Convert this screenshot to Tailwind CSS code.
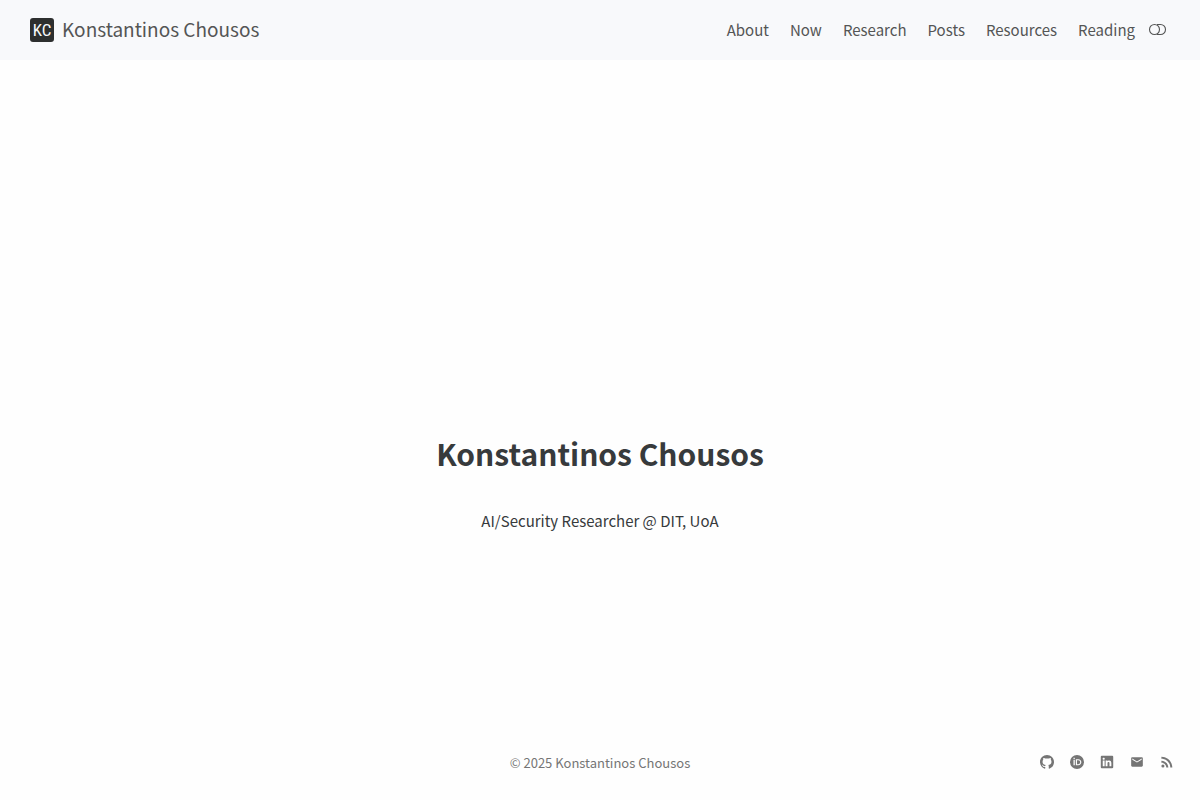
<!doctype html>
<html lang="en">
  <head>
    <meta charset="UTF-8">
    <meta name="viewport" content="width=device-width, initial-scale=1.0">
    <title>Konstantinos Chousos</title>
    <script src="https://cdn.jsdelivr.net/npm/@tailwindcss/browser@4"></script>
  </head>

  <body class="flex min-h-screen flex-col bg-[#fefefe] font-['Noto_Sans_CJK_SC','Noto_Sans',sans-serif] text-[#373a3c]">
    <!-- Navbar -->
    <header class="bg-[#f8f9fb] text-[#545555]">
      <nav class="flex h-15 items-center justify-between pr-[33px] pl-[30px]">
        <a href="/" class="flex items-center gap-2 text-[19px] leading-6">
          <svg class="size-6" viewBox="0 0 24 24" aria-hidden="true">
            <rect width="24" height="24" rx="3" fill="#2d2f2f" />
            <text x="12" y="18" text-anchor="middle" font-family="'Roboto Condensed', 'Noto Sans CJK SC', sans-serif" font-size="17" fill="#f8f9fb">KC</text>
          </svg>
          <span class="pb-0.5">Konstantinos Chousos</span>
        </a>
        <div class="flex items-center gap-3">
          <ul class="flex gap-[21px] text-[15px] leading-6">
            <li><a href="/about">About</a></li>
            <li><a href="/now">Now</a></li>
            <li><a href="/research">Research</a></li>
            <li><a href="/posts">Posts</a></li>
            <li><a href="/resources">Resources</a></li>
            <li><a href="/reading">Reading</a></li>
          </ul>
          <button type="button" aria-label="Toggle dark mode" class="flex">
            <svg class="h-5 w-5" viewBox="0 0 20 20" fill="none" stroke="currentColor" stroke-width="1.1">
              <circle cx="7.500" cy="9.500" r="5" />
              <path d="M10 4.500H13.500a5 5 0 0 1 0 10H10" />
            </svg>
          </button>
        </div>
      </nav>
    </header>

    <!-- Hero -->
    <main class="flex grow flex-col items-center justify-center pt-[170px] text-center">
      <h1 class="text-[30px] leading-10 font-bold">Konstantinos Chousos</h1>
      <p class="mt-9 text-[15px] leading-6">AI/Security Researcher @ DIT, UoA</p>
    </main>

    <!-- Footer -->
    <footer class="grid grid-cols-3 items-center px-[26px] pt-4 pb-[25px] text-[13px] leading-6 text-[#757575]">
      <p class="col-start-2 text-center">© 2025 Konstantinos Chousos</p>
      <ul class="flex justify-end gap-4 pb-0.5">
        <li>
          <a href="https://github.com" aria-label="GitHub">
            <svg class="size-[14px]" viewBox="0 0 16 16" fill="currentColor">
              <path d="M8 0C3.58 0 0 3.58 0 8c0 3.54 2.29 6.53 5.47 7.59.4.07.55-.17.55-.38 0-.19-.01-.82-.01-1.49-2.01.37-2.53-.49-2.69-.94-.09-.23-.48-.94-.82-1.13-.28-.15-.68-.52-.01-.53.63-.01 1.08.58 1.23.82.72 1.21 1.87.87 2.33.66.07-.52.28-.87.51-1.07-1.78-.2-3.64-.89-3.64-3.95 0-.87.31-1.59.82-2.15-.08-.2-.36-1.02.08-2.12 0 0 .67-.21 2.2.82.64-.18 1.32-.27 2-.27.68 0 1.36.09 2 .27 1.53-1.04 2.2-.82 2.2-.82.44 1.1.16 1.92.08 2.12.51.56.82 1.27.82 2.15 0 3.07-1.87 3.75-3.65 3.95.29.25.54.73.54 1.48 0 1.07-.01 1.93-.01 2.2 0 .21.15.46.55.38A8.012 8.012 0 0 0 16 8c0-4.42-3.58-8-8-8z" />
            </svg>
          </a>
        </li>
        <li>
          <a href="https://orcid.org" aria-label="ORCID">
            <svg class="size-[14px]" viewBox="0 0 24 24" fill="currentColor">
              <path fill-rule="evenodd" d="M12 0a12 12 0 1 0 0 24 12 12 0 0 0 0-24zM6 4.500h2.200v2.200H6zM6 8h2.200v9.500H6zM10 7.400h4c3.700 0 5.400 2.600 5.400 5s-2 5.100-5.400 5.100h-4zM12 9.200v6.500h2c2.500 0 3.400-1.700 3.400-3.300s-.9-3.200-3.400-3.200z" />
            </svg>
          </a>
        </li>
        <li>
          <a href="https://www.linkedin.com" aria-label="LinkedIn">
            <svg class="size-[14px]" viewBox="-1 -1 18 18" fill="currentColor">
              <path d="M0 1.146C0 .513.526 0 1.175 0h13.65C15.474 0 16 .513 16 1.146v13.708c0 .633-.526 1.146-1.175 1.146H1.175C.526 16 0 15.487 0 14.854V1.146zm4.943 12.248V6.169H2.542v7.225h2.401zm-1.200-8.212c.837 0 1.358-.554 1.358-1.248-.015-.709-.52-1.248-1.342-1.248-.822 0-1.359.54-1.359 1.248 0 .694.521 1.248 1.327 1.248h.016zm4.908 8.212V9.359c0-.216.016-.432.08-.586.173-.431.568-.878 1.232-.878.869 0 1.216.662 1.216 1.634v3.865h2.401V9.250c0-2.220-1.184-3.252-2.764-3.252-1.274 0-1.845.7-2.165 1.193v.025h-.016a5.540 5.540 0 0 1 .016-.025V6.169h-2.400c.03.678 0 7.225 0 7.225h2.400z" />
            </svg>
          </a>
        </li>
        <li>
          <a href="mailto:hello@example.com" aria-label="Email">
            <svg class="size-[14px]" viewBox="0 0 24 24" fill="currentColor">
              <path d="M20 4H4c-1.100 0-2 .9-2 2v12c0 1.100.9 2 2 2h16c1.100 0 2-.9 2-2V6c0-1.100-.9-2-2-2zm0 4-8 5-8-5V6l8 5 8-5v2z" />
            </svg>
          </a>
        </li>
        <li>
          <a href="/index.xml" aria-label="RSS">
            <svg class="size-[14px]" viewBox="2 2 20 20" fill="currentColor">
              <circle cx="6.180" cy="17.820" r="2.180" />
              <path d="M4 4.440v2.830c7.030 0 12.730 5.700 12.730 12.730h2.830c0-8.590-6.970-15.560-15.560-15.560zm0 5.660v2.830c3.900 0 7.070 3.170 7.070 7.070h2.830c0-5.470-4.430-9.900-9.900-9.900z" />
            </svg>
          </a>
        </li>
      </ul>
    </footer>
  </body>
</html>
